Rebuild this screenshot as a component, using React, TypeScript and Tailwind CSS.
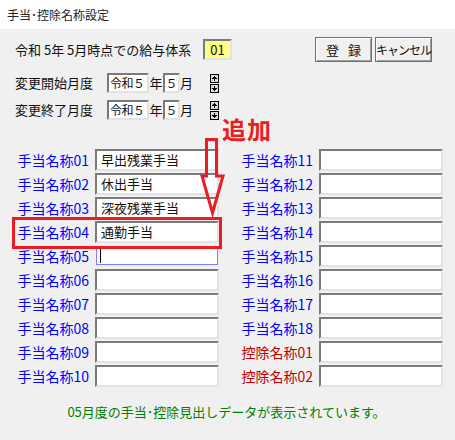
import React from 'react';

const sunken = 'border-2 border-t-[#7a7a7a] border-l-[#7a7a7a] border-b-[#e3e3e3] border-r-[#e3e3e3] bg-white';

const leftRows = [
  { label: '手当名称01', value: '早出残業手当' },
  { label: '手当名称02', value: '休出手当' },
  { label: '手当名称03', value: '深夜残業手当' },
  { label: '手当名称04', value: '通勤手当' },
  { label: '手当名称05', value: '', focus: true },
  { label: '手当名称06', value: '' },
  { label: '手当名称07', value: '' },
  { label: '手当名称08', value: '' },
  { label: '手当名称09', value: '' },
  { label: '手当名称10', value: '' },
];

const rightRows = [
  { label: '手当名称11', red: false },
  { label: '手当名称12', red: false },
  { label: '手当名称13', red: false },
  { label: '手当名称14', red: false },
  { label: '手当名称15', red: false },
  { label: '手当名称16', red: false },
  { label: '手当名称17', red: false },
  { label: '手当名称18', red: false },
  { label: '控除名称01', red: true },
  { label: '控除名称02', red: true },
];

function Spinner() {
  return (
    <div className="flex flex-col gap-[1px] ml-[17px]">
      {[0, 1].map((i) => (
        <div key={i} className="w-[9px] h-[9px] border border-black bg-[#d8d8d8] flex items-center justify-center">
          <svg width="5" height="5" viewBox="0 0 5 5">
            {i === 0 ? (
              <path d="M2 0h1v1h1v1h1v1H0V2h1V1h1zM2 3h1v2H2z" fill="#000" />
            ) : (
              <path d="M0 2h5v1H4v1H3v1H2V4H1V3H0zM2 0h1v2H2z" fill="#000" />
            )}
          </svg>
        </div>
      ))}
    </div>
  );
}

function MonthRow({ label }: { label: string }) {
  return (
    <div className="flex items-center h-[20px]">
      <span className="w-[92px] text-[13px] text-[#111]">{label}</span>
      <div className={`${sunken} w-[42px] h-[20px] flex items-center pl-[1px] text-[12px] whitespace-nowrap overflow-hidden tracking-[-0.5px]`}>令和５</div>
      <span className="w-[14px] text-[13px] text-center">年</span>
      <div className={`${sunken} w-[17px] h-[20px] flex items-center justify-center text-[12px]`}>５</div>
      <span className="w-[13px] text-[13px] text-center">月</span>
      <Spinner />
    </div>
  );
}

export default function App() {
  return (
    <div className="relative w-[455px] h-[440px] bg-[#f0f0f0] font-['Noto_Sans_CJK_JP',sans-serif] text-[#111] overflow-hidden">
      <div className="h-[29px] bg-white flex items-center pl-[7px] text-[12px] text-[#222]">手当･控除名称設定</div>

      <div className="pl-[15px]">
        <div className="mt-[8px] h-[25px] flex items-center">
          <span className="w-[188px] text-[13px] whitespace-nowrap">令和 5年 5月時点での給与体系</span>
          <div className={`${sunken} !bg-[#ffff80] w-[29px] h-[21px] flex items-center justify-center text-[13px]`}>01</div>
          <div className="ml-[83px] flex gap-[3px]">
            <button className="w-[57px] h-[25px] border border-[#707070] bg-[#f0f0f0] shadow-[inset_1px_1px_0_#fff,inset_-1px_-1px_0_#a0a0a0] text-[13px] tracking-[9px] pl-[9px]">登録</button>
            <button className="w-[57px] h-[25px] border border-[#707070] bg-[#f0f0f0] shadow-[inset_1px_1px_0_#fff,inset_-1px_-1px_0_#a0a0a0] text-[12px] tracking-[-1px]">キャンセル</button>
          </div>
        </div>
        <div className="mt-[11px]">
          <MonthRow label="変更開始月度" />
        </div>
        <div className="mt-[7px]">
          <MonthRow label="変更終了月度" />
        </div>
      </div>

      <div className="mt-[29px] flex">
        <div className="flex flex-col gap-[2px]">
          {leftRows.map((r) => (
            <div key={r.label} className="flex items-center h-[22px]">
              <span className="w-[89px] text-right text-[14px] text-[#0000ff]">{r.label}</span>
              {r.focus ? (
                <div className="ml-[7px] w-[122px] h-[18px] my-[2px] border border-[#8080ff] bg-white flex items-center pl-[3px]">
                  <div className="w-[1px] h-[14px] bg-black" />
                </div>
              ) : (
                <div className={`${sunken} ml-[6px] w-[124px] h-[22px] flex items-center pl-[4px] text-[13px]`}>{r.value}</div>
              )}
            </div>
          ))}
        </div>
        <div className="flex flex-col gap-[2px]">
          {rightRows.map((r) => (
            <div key={r.label} className="flex items-center h-[22px]">
              <span className={`w-[94px] text-right text-[14px] ${r.red ? 'text-[#c00000]' : 'text-[#0000ff]'}`}>{r.label}</span>
              <div className={`${sunken} ml-[6px] w-[124px] h-[22px]`} />
            </div>
          ))}
        </div>
      </div>

      <div className="mt-[15px] text-center text-[13px] text-[#008000] pr-[2px]">05月度の手当･控除見出しデータが表示されています。</div>

      {/* annotation overlay */}
      <div className="absolute left-[12px] top-[217px] w-[210px] h-[32px] border-[3px] border-[#ec1c24]" />
      <svg className="absolute left-0 top-0" width="455" height="440">
        <polygon
          points="206.5,139.5 216.5,139.5 216.5,176 223,176 212.5,213 202,176 206.5,176"
          fill="none"
          stroke="#ec1c24"
          strokeWidth="3"
        />
      </svg>
      <div className="absolute left-[222px] top-[117px] text-[24px] font-bold text-[#ec1c24] leading-none tracking-[1px]">追加</div>
    </div>
  );
}
